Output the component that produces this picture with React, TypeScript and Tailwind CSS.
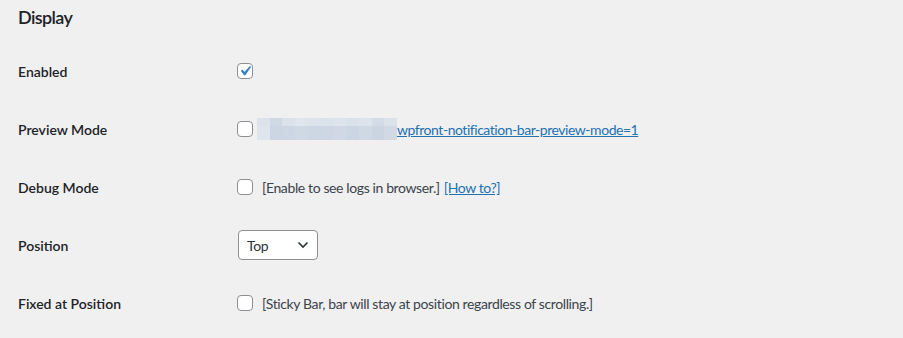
import React from "react";

const font = { fontFamily: 'Lato, "Noto Sans", sans-serif' };

function Checkbox({ checked = false }: { checked?: boolean }) {
  return (
    <span className="relative flex h-4 w-4 shrink-0 items-center justify-center rounded-[4px] border border-[#8c8f94] bg-white">
      {checked && (
        <svg width="20" height="20" viewBox="0 0 20 20" className="absolute left-[-3px] top-[-3px]">
          <path d="M14.83 4.89l1.34.94-5.81 8.38H9.02L5.78 9.67l1.34-1.25 2.57 2.4z" fill="#3582c4" />
        </svg>
      )}
    </span>
  );
}

const blurTop = ["#dde3ea", "#cfd9e4", "#dbe2ea", "#dfe5ec", "#dce3eb", "#dae2ea", "#dde4eb", "#d9e1ea", "#dce3eb", "#d3dce6", "#dbe2ea"];
const blurBot = ["#dfe5ec", "#cbd6e2", "#cdd7e3", "#cfd9e4", "#cdd7e3", "#ccd7e3", "#cfd8e4", "#ccd6e2", "#cfd9e4", "#cad5e1", "#d0d9e4"];

function Row({ label, children }: { label: string; children: React.ReactNode }) {
  return (
    <div className="flex h-[58px] items-center">
      <div className="w-[219px] shrink-0 text-[14px] font-semibold text-[#1d2327]">{label}</div>
      <div className="flex items-center text-[14px] tracking-[-0.38px] text-[#3c434a]">{children}</div>
    </div>
  );
}

export default function App() {
  return (
    <div className="h-[338px] w-[903px] overflow-hidden bg-[#f0f0f1] pl-[18px]" style={font}>
      <div className="flex h-[42px] items-start pt-[5px]">
        <h2 className="text-[18px] font-semibold leading-[24px] tracking-[-0.6px] text-[#1d2327]">Display</h2>
      </div>
      <Row label="Enabled">
        <Checkbox checked />
      </Row>
      <Row label="Preview Mode">
        <Checkbox />
        <span className="ml-[4px] flex h-[22px] w-[140px] flex-col">
          <span className="flex h-[8px]">
            {blurTop.map((c, i) => (
              <span key={i} className="h-full flex-1" style={{ background: c }} />
            ))}
          </span>
          <span className="flex h-[14px]">
            {blurBot.map((c, i) => (
              <span key={i} className="h-full flex-1" style={{ background: c }} />
            ))}
          </span>
        </span>
        <a href="#" className="tracking-[-0.46px] text-[#2271b1] underline">
          wpfront-notification-bar-preview-mode=1
        </a>
      </Row>
      <Row label="Debug Mode">
        <Checkbox />
        <span className="ml-[9px]">[Enable to see logs in browser.]</span>
        <a href="#" className="ml-[4px] text-[#2271b1] underline">
          [How to?]
        </a>
      </Row>
      <Row label="Position">
        <div className="ml-px flex h-[30px] w-[80px] items-center justify-between rounded-[4px] border border-[#8c8f94] bg-white pl-[8px] pr-[8px] text-[14px] text-[#2c3338]">
          <span>Top</span>
          <svg width="12" height="8" viewBox="0 0 12 8">
            <path d="M1.5 1.5L6 6l4.5-4.5" fill="none" stroke="#2c3338" strokeWidth="1.6" />
          </svg>
        </div>
      </Row>
      <Row label="Fixed at Position">
        <Checkbox />
        <span className="ml-[9px]">[Sticky Bar, bar will stay at position regardless of scrolling.]</span>
      </Row>
    </div>
  );
}
